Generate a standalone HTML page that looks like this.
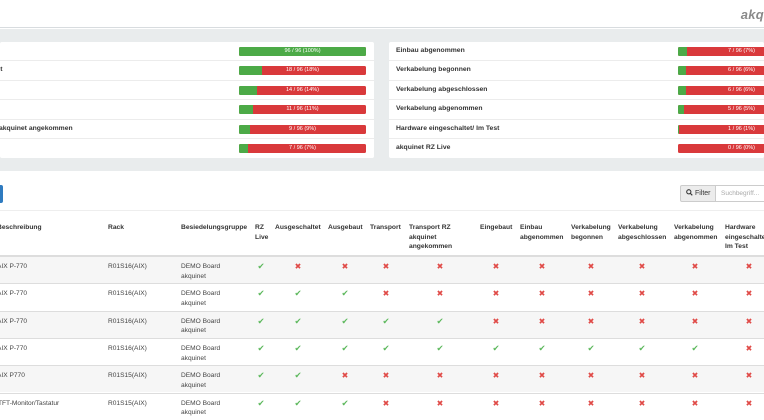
<!DOCTYPE html>
<html><head><meta charset="utf-8"><style>
*{margin:0;padding:0;box-sizing:border-box}
html,body{width:764px;height:420px;overflow:hidden}
body{background:#fff;font-family:"Liberation Sans",Arial,sans-serif;color:#333;position:relative}
.a{position:absolute}
.hdr{left:0;top:0;width:764px;height:28px;background:#fff;border-bottom:1px solid #d8dcdf;overflow:hidden}
.logo{right:0;top:7px;font-size:13px;font-weight:bold;font-style:italic;color:#8a8a8a;letter-spacing:0.3px}
.band{left:0;top:29px;width:764px;height:142px;background:#e9eced}
.panel{top:42px;height:116px;background:#fff;border-radius:2px;overflow:hidden}
.row{position:absolute;left:0;width:100%;height:19.4px;border-bottom:1px solid #ececec}
.lbl{position:absolute;top:5px;font-size:6.8px;font-weight:bold;color:#333;white-space:nowrap}
.bar{position:absolute;top:5px;width:127px;height:9px;background:#d9393b;border-radius:1.5px;overflow:hidden}
.bar i{position:absolute;left:0;top:0;height:9px;background:#4caa47}
.bar span{position:absolute;left:0;width:100%;top:1px;text-align:center;font-size:5.5px;color:#fff;line-height:7px}
.th{position:absolute;font-size:6.7px;font-weight:bold;line-height:9.6px;top:223px;color:#333;white-space:nowrap}
.tr{position:absolute;left:0;width:764px;height:27.3px;border-top:1px solid #ddd;overflow:hidden}
.tr.s{background:#f6f6f6}
.td{position:absolute;top:5px;font-size:6.6px;line-height:9.8px;color:#444;white-space:nowrap}
.k,.x{position:absolute;top:5px;font-family:"DejaVu Sans",sans-serif;font-size:8.5px;width:12px;margin-left:-6px;text-align:center;line-height:10px}
.k{color:#5cb85c}.x{color:#e04a47;font-size:8px}
.clip{position:absolute;left:0;top:0;width:764px;height:420px;overflow:hidden}
</style></head><body><div class="clip">
<div class="a hdr"><div class="a logo">akq</div></div>
<div class="a band"></div>
<div class="a panel" style="left:0;width:374px">
 <div class="row" style="top:0"><div class="bar" style="left:239px"><i style="width:100%"></i><span>96 / 96 (100%)</span></div></div>
 <div class="row" style="top:19.4px"><div class="lbl" style="left:-44px">Ausgeschaltet</div><div class="bar" style="left:239px"><i style="width:18%"></i><span>18 / 96 (18%)</span></div></div>
 <div class="row" style="top:38.8px"><div class="bar" style="left:239px"><i style="width:14%"></i><span>14 / 96 (14%)</span></div></div>
 <div class="row" style="top:58.2px"><div class="bar" style="left:239px"><i style="width:11%"></i><span>11 / 96 (11%)</span></div></div>
 <div class="row" style="top:77.6px"><div class="lbl" style="left:-1px">akquinet angekommen</div><div class="bar" style="left:239px"><i style="width:9%"></i><span>9 / 96 (9%)</span></div></div>
 <div class="row" style="top:97px;border:none"><div class="bar" style="left:239px"><i style="width:7%"></i><span>7 / 96 (7%)</span></div></div>
</div>
<div class="a panel" style="left:389px;width:375px">
 <div class="row" style="top:0"><div class="lbl" style="left:7px">Einbau abgenommen</div><div class="bar" style="left:289px"><i style="width:7%"></i><span>7 / 96 (7%)</span></div></div>
 <div class="row" style="top:19.4px"><div class="lbl" style="left:7px">Verkabelung begonnen</div><div class="bar" style="left:289px"><i style="width:6%"></i><span>6 / 96 (6%)</span></div></div>
 <div class="row" style="top:38.8px"><div class="lbl" style="left:7px">Verkabelung abgeschlossen</div><div class="bar" style="left:289px"><i style="width:6%"></i><span>6 / 96 (6%)</span></div></div>
 <div class="row" style="top:58.2px"><div class="lbl" style="left:7px">Verkabelung abgenommen</div><div class="bar" style="left:289px"><i style="width:5%"></i><span>5 / 96 (5%)</span></div></div>
 <div class="row" style="top:77.6px"><div class="lbl" style="left:7px">Hardware eingeschaltet/ Im Test</div><div class="bar" style="left:289px"><i style="width:1%"></i><span>1 / 96 (1%)</span></div></div>
 <div class="row" style="top:97px;border:none"><div class="lbl" style="left:7px">akquinet RZ Live</div><div class="bar" style="left:289px"><span>0 / 96 (0%)</span></div></div>
</div>
<div class="a" style="left:0;top:185px;width:3px;height:18px;background:#2f7bc0;border-radius:0 2px 2px 0"></div>
<div class="a" style="left:680px;top:185px;width:36px;height:17px;background:#ececec;border:1px solid #ccc;border-radius:2px 0 0 2px;font-size:7px;line-height:15px;padding-left:5px;color:#333"><svg width="7" height="7" viewBox="0 0 10 10" style="vertical-align:-1px"><circle cx="4" cy="4" r="3" fill="none" stroke="#333" stroke-width="1.5"/><path d="M6.2 6.2L9 9" stroke="#333" stroke-width="1.6"/></svg> Filter</div>
<div class="a" style="left:715px;top:185px;width:49px;height:17px;border:1px solid #ccc;border-right:none;font-size:6.5px;line-height:15px;padding-left:5px;color:#aaa;overflow:hidden;white-space:nowrap">Suchbegriff...</div>
<div class="a" style="left:0;top:210px;width:764px;height:1px;background:#eee"></div>
<div class="th" style="left:-3px">Beschreibung</div>
<div class="th" style="left:108px">Rack</div>
<div class="th" style="left:181px">Besiedelungsgruppe</div>
<div class="th" style="left:255px">RZ<br>Live</div>
<div class="th" style="left:275px">Ausgeschaltet</div>
<div class="th" style="left:328px">Ausgebaut</div>
<div class="th" style="left:370px">Transport</div>
<div class="th" style="left:409px">Transport RZ<br>akquinet<br>angekommen</div>
<div class="th" style="left:480px">Eingebaut</div>
<div class="th" style="left:520px">Einbau<br>abgenommen</div>
<div class="th" style="left:571px">Verkabelung<br>begonnen</div>
<div class="th" style="left:618px">Verkabelung<br>abgeschlossen</div>
<div class="th" style="left:674px">Verkabelung<br>abgenommen</div>
<div class="th" style="left:725px">Hardware<br>eingeschaltet/<br>Im Test</div>
<div class="a" style="left:0;top:255px;width:764px;height:2px;background:#ddd"></div>

<div class="tr s" style="top:256px"><div class="td" style="left:-3px">AIX P-770</div><div class="td" style="left:108px">R01S16(AIX)</div><div class="td" style="left:181px">DEMO Board<br>akquinet</div>
<span class="k" style="left:261px">✔</span><span class="x" style="left:298px">✖</span><span class="x" style="left:345px">✖</span><span class="x" style="left:386px">✖</span><span class="x" style="left:440px">✖</span><span class="x" style="left:496px">✖</span><span class="x" style="left:542px">✖</span><span class="x" style="left:591px">✖</span><span class="x" style="left:642px">✖</span><span class="x" style="left:695px">✖</span><span class="x" style="left:749px">✖</span></div>

<div class="tr" style="top:283.3px"><div class="td" style="left:-3px">AIX P-770</div><div class="td" style="left:108px">R01S16(AIX)</div><div class="td" style="left:181px">DEMO Board<br>akquinet</div>
<span class="k" style="left:261px">✔</span><span class="k" style="left:298px">✔</span><span class="k" style="left:345px">✔</span><span class="x" style="left:386px">✖</span><span class="x" style="left:440px">✖</span><span class="x" style="left:496px">✖</span><span class="x" style="left:542px">✖</span><span class="x" style="left:591px">✖</span><span class="x" style="left:642px">✖</span><span class="x" style="left:695px">✖</span><span class="x" style="left:749px">✖</span></div>

<div class="tr s" style="top:310.6px"><div class="td" style="left:-3px">AIX P-770</div><div class="td" style="left:108px">R01S16(AIX)</div><div class="td" style="left:181px">DEMO Board<br>akquinet</div>
<span class="k" style="left:261px">✔</span><span class="k" style="left:298px">✔</span><span class="k" style="left:345px">✔</span><span class="k" style="left:386px">✔</span><span class="k" style="left:440px">✔</span><span class="x" style="left:496px">✖</span><span class="x" style="left:542px">✖</span><span class="x" style="left:591px">✖</span><span class="x" style="left:642px">✖</span><span class="x" style="left:695px">✖</span><span class="x" style="left:749px">✖</span></div>

<div class="tr" style="top:337.9px"><div class="td" style="left:-3px">AIX P-770</div><div class="td" style="left:108px">R01S16(AIX)</div><div class="td" style="left:181px">DEMO Board<br>akquinet</div>
<span class="k" style="left:261px">✔</span><span class="k" style="left:298px">✔</span><span class="k" style="left:345px">✔</span><span class="k" style="left:386px">✔</span><span class="k" style="left:440px">✔</span><span class="k" style="left:496px">✔</span><span class="k" style="left:542px">✔</span><span class="k" style="left:591px">✔</span><span class="k" style="left:642px">✔</span><span class="k" style="left:695px">✔</span><span class="x" style="left:749px">✖</span></div>

<div class="tr s" style="top:365.2px"><div class="td" style="left:-3px">AIX P770</div><div class="td" style="left:108px">R01S15(AIX)</div><div class="td" style="left:181px">DEMO Board<br>akquinet</div>
<span class="k" style="left:261px">✔</span><span class="k" style="left:298px">✔</span><span class="x" style="left:345px">✖</span><span class="x" style="left:386px">✖</span><span class="x" style="left:440px">✖</span><span class="x" style="left:496px">✖</span><span class="x" style="left:542px">✖</span><span class="x" style="left:591px">✖</span><span class="x" style="left:642px">✖</span><span class="x" style="left:695px">✖</span><span class="x" style="left:749px">✖</span></div>

<div class="tr" style="top:392.5px"><div class="td" style="left:-2px">TFT-Monitor/Tastatur</div><div class="td" style="left:108px">R01S15(AIX)</div><div class="td" style="left:181px">DEMO Board<br>akquinet</div>
<span class="k" style="left:261px">✔</span><span class="k" style="left:298px">✔</span><span class="k" style="left:345px">✔</span><span class="x" style="left:386px">✖</span><span class="x" style="left:440px">✖</span><span class="x" style="left:496px">✖</span><span class="x" style="left:542px">✖</span><span class="x" style="left:591px">✖</span><span class="x" style="left:642px">✖</span><span class="x" style="left:695px">✖</span><span class="x" style="left:749px">✖</span></div>
</div></body></html>
